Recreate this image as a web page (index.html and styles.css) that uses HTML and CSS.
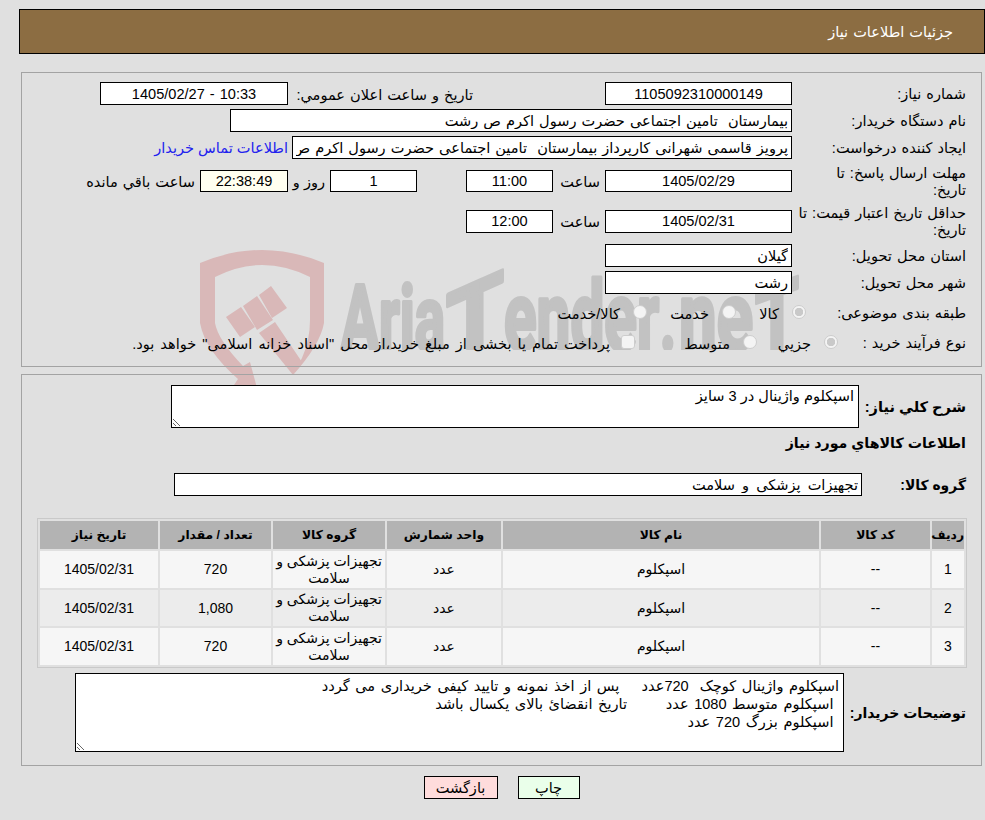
FILE: index.html
```html
<!DOCTYPE html>
<html lang="fa" dir="rtl">
<head>
<meta charset="utf-8">
<title>جزئیات اطلاعات نیاز</title>
<link rel="stylesheet" href="styles.css">
</head>
<body>
<svg class="watermark" width="985" height="820" viewBox="0 0 985 820" aria-hidden="true">
  <defs><clipPath id="base"><rect x="330" y="260" width="480" height="90"/></clipPath></defs>
  <path class="shield" d="M200 263Q262 237 324 263L324 323Q320 345 293 375L302 358Q310 340 310 320L310 277Q262 253 215 277L215 323Q218 340 243 366L250 362L257 388L232 388L238 379Q205 350 200 323Z"/>
  <path class="shield" d="M226 317L241 307L255 327L240 337ZM243 306L257 296L273 320L257 330ZM259 295L271 286L287 308L272 318ZM259 333L275 322L302 362L293 375Z"/>
  <g class="wm-text" clip-path="url(#base)">
    <text x="341" y="350" font-size="90" textLength="104" lengthAdjust="spacingAndGlyphs">Aria</text>
    <text x="446" y="350" font-size="100" textLength="58" lengthAdjust="spacingAndGlyphs" transform="translate(0 215) skewY(-24)">T</text>
    <text x="504" y="350" font-size="96" textLength="155" lengthAdjust="spacingAndGlyphs">ender</text>
    <text x="660" y="350" font-size="90" textLength="16" lengthAdjust="spacingAndGlyphs">.</text>
    <text x="679" y="350" font-size="96" textLength="74" lengthAdjust="spacingAndGlyphs">ne</text>
    <text x="755" y="350" font-size="100" textLength="44" lengthAdjust="spacingAndGlyphs" transform="translate(0 288) skewY(-20)">T</text>
  </g>
</svg>

<header class="page-title">جزئیات اطلاعات نیاز</header>

<section class="panel panel-info">
  <div class="row row-std">
    <label class="lbl">شماره نیاز:</label>
    <input class="box box-187 center" readonly value="1105092310000149">
    <label class="lbl-announce">تاریخ و ساعت اعلان عمومي:</label>
    <input class="box box-188 center" readonly value="10:33 - 1405/02/27">
  </div>
  <div class="row row-std">
    <label class="lbl">نام دستگاه خریدار:</label>
    <input class="box box-562" readonly value="بیمارستان  تامین اجتماعی حضرت رسول اکرم ص رشت">
  </div>
  <div class="row row-std">
    <label class="lbl">ایجاد کننده درخواست:</label>
    <input class="box box-500" readonly value="پرویز قاسمی شهرانی کارپرداز بیمارستان  تامین اجتماعی حضرت رسول اکرم ص رشت">
    <a class="contact" href="#">اطلاعات تماس خریدار</a>
  </div>
  <div class="row row-tall">
    <label class="lbl">مهلت ارسال پاسخ: تا<br>تاریخ:</label>
    <input class="box box-187 box-short center" readonly value="1405/02/29">
    <span class="hour">ساعت</span>
    <input class="box box-87 box-short center" readonly value="11:00">
    <span class="gap-49"></span>
    <input class="box box-87 box-short center" readonly value="1">
    <span class="days">روز و</span>
    <input class="box box-88 box-short center timer" readonly value="22:38:49">
    <span class="remain">ساعت باقي مانده</span>
  </div>
  <div class="row row-tall row-validity">
    <label class="lbl">حداقل تاریخ اعتبار قیمت: تا<br>تاریخ:</label>
    <input class="box box-187 center" readonly value="1405/02/31">
    <span class="hour">ساعت</span>
    <input class="box box-87 center" readonly value="12:00">
  </div>
  <div class="row row-std">
    <label class="lbl">استان محل تحویل:</label>
    <input class="box box-187" readonly value="گیلان">
  </div>
  <div class="row row-std">
    <label class="lbl">شهر محل تحویل:</label>
    <input class="box box-187" readonly value="رشت">
  </div>
  <div class="row row-choice">
    <label class="lbl lbl-subject">طبقه بندی موضوعی:</label>
    <label class="opt opt-70"><input class="pick" type="radio" name="subject" checked disabled>کالا</label>
    <label class="opt opt-89"><input class="pick" type="radio" name="subject" disabled>خدمت</label>
    <label class="opt"><input class="pick" type="radio" name="subject" disabled>کالا/خدمت</label>
  </div>
  <div class="row row-choice">
    <label class="lbl lbl-process">نوع فرآیند خرید :</label>
    <label class="opt opt-81"><input class="pick" type="radio" name="process" checked disabled>جزیي</label>
    <label class="opt opt-122"><input class="pick" type="radio" name="process" disabled>متوسط</label>
    <label class="opt opt-note"><input class="pick square" type="checkbox" disabled>پرداخت تمام یا بخشی از مبلغ خرید،از محل "اسناد خزانه اسلامی" خواهد بود.</label>
  </div>
</section>

<section class="panel panel-goods">
  <div class="row row-summary">
    <label class="lbl-b lbl-107">شرح کلي نياز:</label>
    <textarea class="area area-summary" readonly>اسپکلوم واژینال در 3 سایز</textarea>
  </div>
  <h2 class="goods-title">اطلاعات کالاهاي مورد نياز</h2>
  <div class="row row-group">
    <label class="lbl-b lbl-104">گروه کالا:</label>
    <input class="box box-688" readonly value="تجهیزات پزشکی و سلامت">
  </div>
  <table class="goods">
    <thead>
      <tr><th class="c-row">ردیف</th><th class="c-code">کد کالا</th><th class="c-name">نام کالا</th><th class="c-unit">واحد شمارش</th><th class="c-group">گروه کالا</th><th class="c-qty">تعداد / مقدار</th><th class="c-date">تاریخ نیاز</th></tr>
    </thead>
    <tbody>
      <tr><td>1</td><td>--</td><td>اسپکلوم</td><td>عدد</td><td>تجهیزات پزشکی و سلامت</td><td>720</td><td>1405/02/31</td></tr>
      <tr><td>2</td><td>--</td><td>اسپکلوم</td><td>عدد</td><td>تجهیزات پزشکی و سلامت</td><td>1,080</td><td>1405/02/31</td></tr>
      <tr><td>3</td><td>--</td><td>اسپکلوم</td><td>عدد</td><td>تجهیزات پزشکی و سلامت</td><td>720</td><td>1405/02/31</td></tr>
    </tbody>
  </table>
  <div class="row row-notes">
    <label class="lbl-b lbl-122">توضیحات خریدار:</label>
    <textarea class="area area-notes" readonly>اسپکلوم واژینال کوچک  720عدد    پس از اخذ نمونه و تایید کیفی خریداری می گردد
 اسپکلوم متوسط 1080 عدد       تاریخ انقضائ بالای یکسال باشد
 اسپکلوم بزرگ 720 عدد</textarea>
  </div>
</section>

<div class="actions">
  <button class="btn btn-print" type="button">چاپ</button>
  <button class="btn btn-back" type="button">بازگشت</button>
</div>
</body>
</html>
```
FILE: styles.css
```css
* { box-sizing: border-box; }
html, body { margin: 0; padding: 0; }
body {
  position: relative;
  width: 985px;
  height: 820px;
  overflow: hidden;
  background: #e0e0e0;
  color: #000;
  font-family: "Liberation Sans", "DejaVu Sans", sans-serif;
  font-size: 14.67px;
  font-size-adjust: 0.525;
  word-spacing: 1px;
}
.watermark { position: absolute; left: 0; top: 0; direction: ltr; }
.shield { fill: #d9b8b8; }
.wm-text {
  fill: #c2c2c2;
  stroke: #c2c2c2;
  stroke-width: 4px;
  stroke-linejoin: round;
  font-family: "Roboto", "Liberation Sans", sans-serif;
  font-weight: 700;
  font-size-adjust: none;
  word-spacing: 0;
}

.page-title {
  position: relative;
  display: flex;
  align-items: center;
  height: 45px;
  margin: 9px 0 0 19px;
  padding: 0 31px 0 0;
  border: 1px solid #000;
  background: #8c6d42;
  color: #fff;
}
.panel {
  position: relative;
  width: 961px;
  margin-right: 3px;
  border: 1px solid #a3a3a3;
  padding: 0 15px;
}
.panel-info { height: 295px; margin-top: 18px; padding-top: 9px; }
.panel-goods { height: 392px; margin-top: 7px; padding-top: 10px; }

.row { display: flex; align-items: center; }
.row-std { height: 23px; margin-bottom: 4px; }
.row-tall { height: 36px; margin-bottom: 4px; }
.row-validity { margin-bottom: 5px; }
.row-choice { height: 30px; }

.lbl { flex: none; width: 174px; padding-top: 2px; line-height: 17px; white-space: nowrap; }
.lbl-announce { flex: none; width: 185px; margin-right: 132px; padding-top: 2px; white-space: nowrap; }
.lbl-subject { width: 160px; padding-top: 0; }
.lbl-process { width: 128px; padding-top: 0; }
.lbl-b { flex: none; font-weight: 700; word-spacing: 0; }
.lbl-107 { width: 107px; }
.lbl-104 { width: 104px; font-size: 14px; }
.lbl-122 { width: 122px; font-size: 14.1px; }

.box {
  flex: none;
  height: 23px;
  margin: 0;
  padding: 0 3px;
  border: 1px solid #000;
  border-radius: 0;
  outline: none;
  background: #fff;
  color: #000;
  font: inherit;
  font-size-adjust: inherit;
  word-spacing: inherit;
  text-align: right;
}
.box-short { height: 22px; }
.center { text-align: center; }
.box-187 { width: 187px; }
.box-188 { width: 188px; }
.box-562 { width: 562px; }
.box-500 { width: 500px; }
.box-87 { width: 87px; }
.box-88 { width: 88px; }
.box-688 { width: 688px; word-spacing: 3px; }
.timer { background: #fffff0; }

.contact { margin-right: 4px; color: #2222ee; text-decoration: none; white-space: nowrap; word-spacing: 0; }
.hour { flex: none; width: 52px; padding-right: 5px; white-space: nowrap; }
.gap-49 { flex: none; width: 49px; }
.days { flex: none; width: 42px; padding-right: 5px; white-space: nowrap; word-spacing: 0; }
.remain { flex: none; margin-right: 5px; white-space: nowrap; }

.opt { display: flex; align-items: center; flex: none; white-space: nowrap; }
.opt-70 { width: 70px; }
.opt-89 { width: 89px; }
.opt-81 { width: 81px; }
.opt-122 { width: 122px; }
.opt-note { word-spacing: 2px; }
.pick {
  appearance: none;
  flex: none;
  position: relative;
  top: -1px;
  width: 14px;
  height: 14px;
  margin: 0 0 0 13px;
  border: 1px solid #cdcdcd;
  border-radius: 50%;
  background: #f4f4f4;
}
.pick:checked { background: radial-gradient(circle, #c9c9c9 0 4px, #f4f4f4 4.5px); }
.square { border-radius: 3px; margin-left: 11px; }

.row-summary { height: 43px; }
.area {
  flex: none;
  display: block;
  margin: 0;
  padding: 1px 4px;
  border: 1px solid #000;
  border-radius: 0;
  outline: none;
  background: #fff;
  color: #000;
  font: inherit;
  font-size-adjust: inherit;
  word-spacing: 0;
  line-height: 18px;
  overflow: hidden;
  resize: both;
}
.area-summary { width: 688px; height: 43px; }
.area-notes { width: 769px; height: 79px; padding-top: 3px; word-spacing: 1.5px; }

.goods-title { margin: 6px 0 0; height: 18px; line-height: 18px; font-size: 14.3px; font-weight: 700; word-spacing: 0; }
.row-group { height: 23px; margin-top: 21px; }

.goods {
  width: 928px;
  margin: 22px -1px 0 0;
  border: 1px solid #c9c9c9;
  border-collapse: separate;
  border-spacing: 2px;
  table-layout: fixed;
  font-size: 14.1px;
  word-spacing: 0;
}
.goods th { height: 28px; padding: 0; background: #b3b3b3; font-size: 12.4px; font-weight: 700; }
.goods td { height: 37px; padding: 0; background: #f6f6f6; text-align: center; line-height: 17px; }
.goods tbody tr:nth-child(2) td { height: 36px; background: #ececec; }
.c-row { width: 32px; }
.c-code { width: 109px; }
.c-name { width: 316px; }
.c-unit { width: 114px; }
.c-group { width: 112px; }
.c-qty { width: 111px; }
.c-date { width: 118px; }

.row-notes { height: 79px; margin-top: 5px; }

.actions { display: flex; justify-content: center; gap: 20px; position: relative; width: 961px; margin: 10px 3px 0 0; }
.btn {
  height: 23px;
  margin: 0;
  padding: 0;
  border: 1px solid #000;
  border-radius: 0;
  color: #000;
  font: inherit;
  font-size-adjust: inherit;
}
.btn-print { width: 62px; background: #eaffea; }
.btn-back { width: 74px; background: #ffdcdc; }
```
